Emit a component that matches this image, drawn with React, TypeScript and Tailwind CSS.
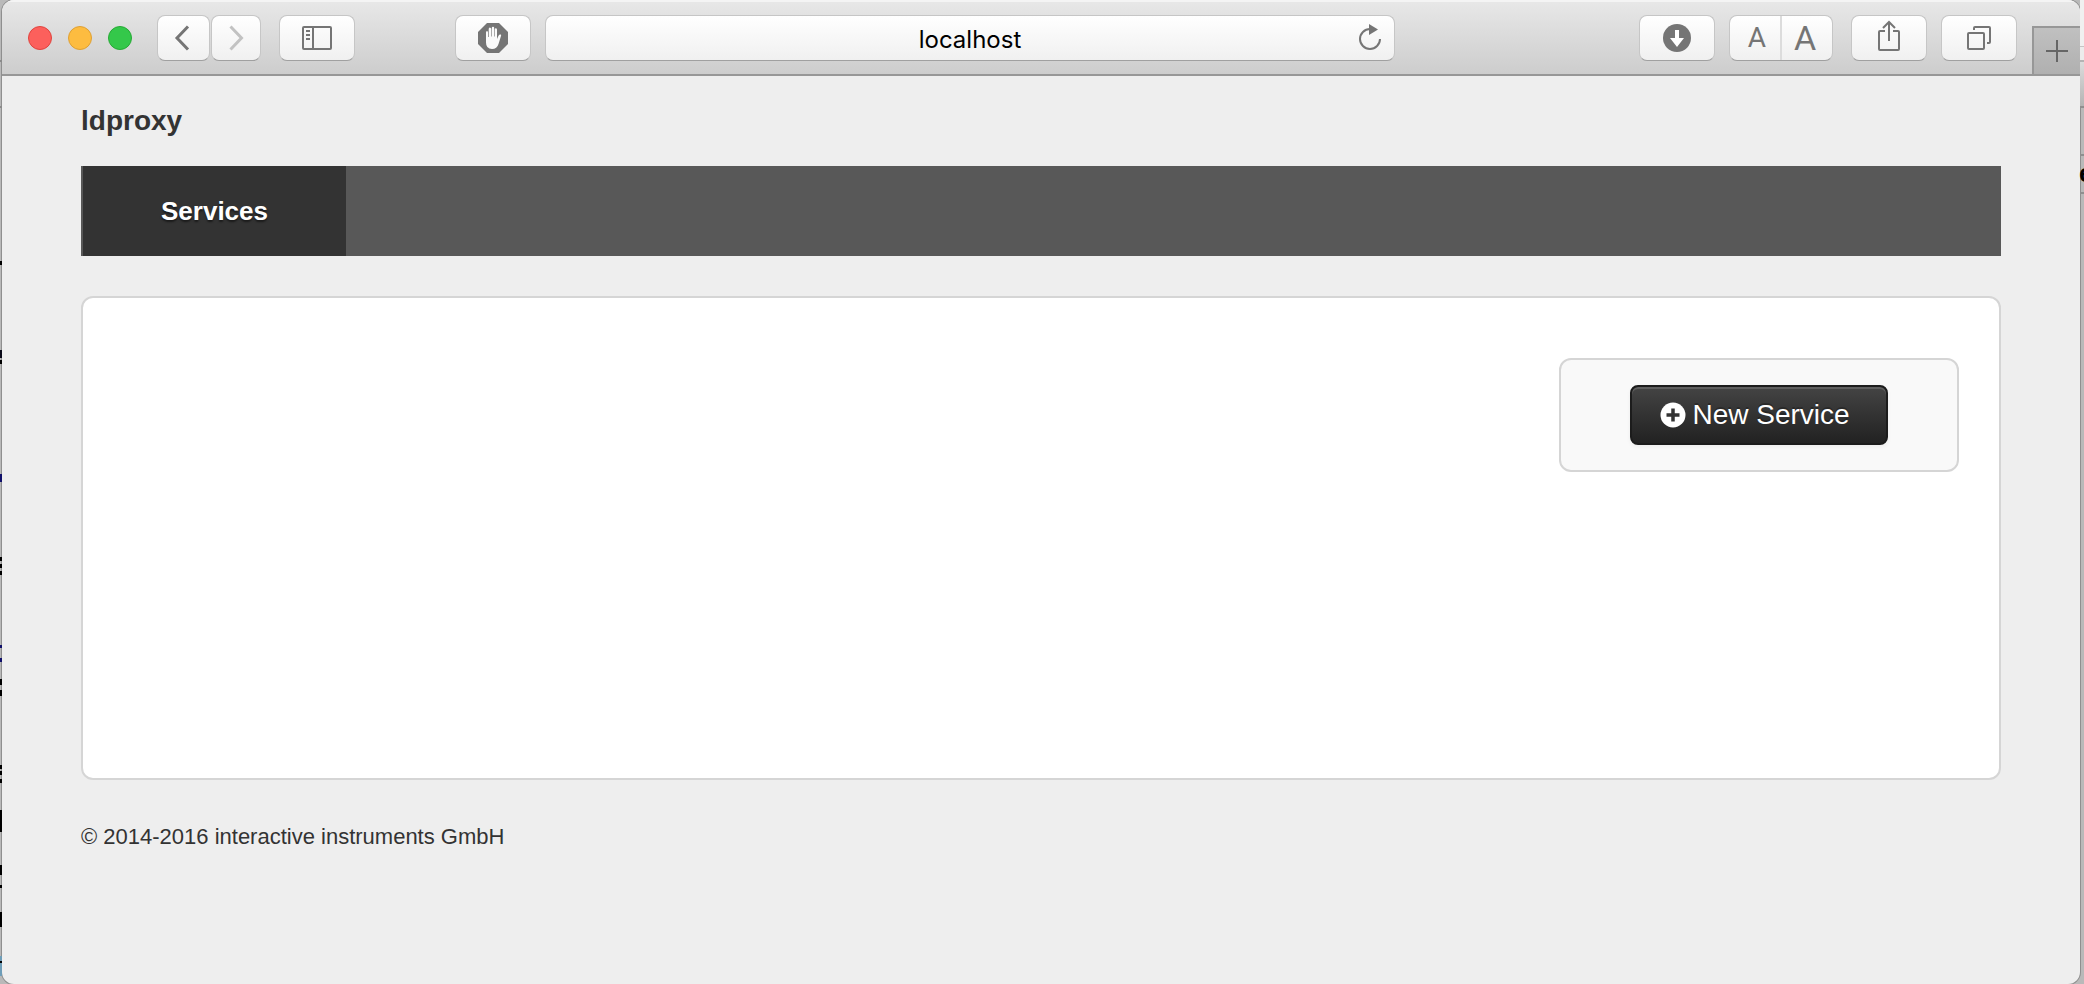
import React from "react";

const control =
  "flex h-[46px] items-center justify-center rounded-lg border border-[#c6c6c6] border-b-[#a0a0a0] bg-linear-to-b from-white to-[#f0f0f0] text-[#757575]";

const leftMarks = [
  { top: 60, height: 2, color: "#8a8a8a" },
  { top: 106, height: 2, color: "#8a8a8a" },
  { top: 261, height: 4, color: "#000" },
  { top: 350, height: 8, color: "#0a0a18" },
  { top: 360, height: 4, color: "#000" },
  { top: 474, height: 8, color: "#10106a" },
  { top: 557, height: 4, color: "#000" },
  { top: 564, height: 4, color: "#000" },
  { top: 571, height: 4, color: "#000" },
  { top: 645, height: 3, color: "#10106a" },
  { top: 658, height: 4, color: "#10106a" },
  { top: 679, height: 6, color: "#000" },
  { top: 690, height: 6, color: "#000" },
  { top: 765, height: 4, color: "#000" },
  { top: 771, height: 4, color: "#000" },
  { top: 779, height: 4, color: "#000" },
  { top: 810, height: 22, color: "#000" },
  { top: 865, height: 10, color: "#000" },
  { top: 885, height: 3, color: "#000" },
  { top: 912, height: 15, color: "#000" },
  { top: 956, height: 20, color: "#6e9db8" },
  { top: 961, height: 2, color: "#000" },
];

const rightMarks = [
  { top: 0, height: 46, color: "#f0f0f0" },
  { top: 46, height: 1, color: "#c4c4c4" },
  { top: 47, height: 13, color: "#ececec" },
  { top: 60, height: 2, color: "#b4b4b4" },
  { top: 62, height: 44, color: "linear-gradient(#dcdcdc, #b4b4b4)" },
  { top: 106, height: 2, color: "#8f8f8f" },
  { top: 154, height: 2, color: "#8f8f8f" },
  { top: 192, height: 2, color: "#8f8f8f" },
];

function Toolbar() {
  return (
    <header className="flex h-[76px] items-center border-b-2 border-[#979797] bg-linear-to-b from-[#e8e8e8] to-[#cdcdcd] pt-0.5 pl-[26px] shadow-[inset_0_2px_0_#f4f4f4]">
      <div className="flex gap-4">
        <button aria-label="Close" className="size-6 rounded-full border border-[#e0443e] bg-[#fc605c]" />
        <button aria-label="Minimize" className="size-6 rounded-full border border-[#dea034] bg-[#fdbc40]" />
        <button aria-label="Zoom" className="size-6 rounded-full border border-[#27aa35] bg-[#34c84a]" />
      </div>
      <div className="ml-[25px] flex gap-px">
        <button aria-label="Back" className={`${control} w-[53px] pr-1`}>
          <svg width="16" height="26" viewBox="0 0 16 26" fill="none" stroke="currentColor" strokeWidth="3">
            <path d="M14 1.500 3 13l11 11.500" />
          </svg>
        </button>
        <button aria-label="Forward" className={`${control} w-[50px]`}>
          <svg width="16" height="26" viewBox="0 0 16 26" fill="none" stroke="#c2c2c2" strokeWidth="3">
            <path d="M2.500 1.500 13.500 13l-11 11.500" />
          </svg>
        </button>
      </div>
      <button aria-label="Show sidebar" className={`${control} ml-[18px] w-19`}>
        <svg width="30" height="24" viewBox="0 0 30 24" fill="none" stroke="currentColor" strokeWidth="2">
          <rect x="1" y="1" width="28" height="22" rx="1" />
          <path d="M11 1v22M4 5h4M4 9h4M4 13h4" />
        </svg>
      </button>
      <button aria-label="Content blocker" className={`${control} ml-[100px] w-19`}>
        <svg width="30" height="30" viewBox="0 0 30 30">
          <path fill="#757575" d="M9 0h12l9 9v12l-9 9H9l-9-9V9z" />
          <path
            fill="#fafafa"
            d="M8 9.500q0-1.500 1-1.500t1 1.500V14h.7V6q0-1.500 1.200-1.500T13.200 6v7.500h.6V5q0-1.300 1.200-1.300T16.200 5v8.500h.6V6.500q0-1.300 1-1.300t1.200 1.300V16l1.500-3.200q1-1.900 2.300-1.200.6.400.2 1.500L20.500 21q-1.500 5-6.500 5-6 0-6-6.500z"
          />
        </svg>
      </button>
      <div className={`${control} relative ml-[14px] min-w-0 flex-1`}>
        <input
          aria-label="Address"
          defaultValue="localhost"
          className="h-full w-full bg-transparent pt-0.5 text-center font-[Inter,sans-serif] text-2xl text-black outline-none"
        />
        <button aria-label="Reload" className="absolute top-2 right-3">
          <svg width="24" height="28" viewBox="0 0 24 28">
            <path d="M12 5a10 10 0 1 0 10 10" fill="none" stroke="currentColor" strokeWidth="2" />
            <path d="M11 0v11l9-5.500z" fill="currentColor" />
          </svg>
        </button>
      </div>
      <button aria-label="Downloads" className={`${control} ml-[244px] w-19`}>
        <svg width="28" height="28" viewBox="0 0 28 28">
          <circle cx="14" cy="14" r="14" fill="#757575" />
          <path d="M12 6h4v8h5l-7 9-7-9h5z" fill="#fff" />
        </svg>
      </button>
      <div className={`${control} ml-[14px] w-[104px] font-[Roboto,sans-serif] text-[#7d7d7d]`}>
        <button aria-label="Smaller text" className="flex h-full flex-1 items-center justify-center border-r-2 border-[#dcdcdc] pl-1 text-[28px]">
          A
        </button>
        <button aria-label="Larger text" className="flex h-full flex-1 items-center justify-center pr-1 text-[34px]">
          A
        </button>
      </div>
      <button aria-label="Share" className={`${control} ml-[18px] w-19`}>
        <svg width="24" height="32" viewBox="0 0 24 32" fill="none" stroke="currentColor" strokeWidth="2" className="mb-1">
          <path d="M8 11H3q-1 0-1 1v17q0 1 1 1h18q1 0 1-1V12q0-1-1-1h-5M12 21V3M6 8l6-6 6 6" />
        </svg>
      </button>
      <button aria-label="Show all tabs" className={`${control} ml-[14px] w-19`}>
        <svg width="26" height="26" viewBox="0 0 26 26" fill="none" stroke="currentColor" strokeWidth="2">
          <rect x="2" y="8" width="16" height="16" rx="1" />
          <path d="M8 5V3q0-1 1-1h14q1 0 1 1v14q0 1-1 1h-2" />
        </svg>
      </button>
      <button
        aria-label="New tab"
        className="ml-[15px] flex h-12 w-12 items-center justify-center self-end border-t-2 border-l-2 border-[#979797] bg-linear-to-b from-[#c0c0c0] to-[#b0b0b0] text-[#666]"
      >
        <svg width="22" height="22" viewBox="0 0 22 22" stroke="currentColor" strokeWidth="2">
          <path d="M11 0v22M0 11h22" />
        </svg>
      </button>
    </header>
  );
}

export default function App() {
  return (
    <div className="relative flex min-h-screen overflow-hidden bg-[#b9b9b9] pr-1 pl-0.5 font-['Liberation_Sans',Arial,sans-serif] text-[#333]">
      {leftMarks.map((m) => (
        <i key={m.top} className="absolute left-0 w-0.5" style={{ top: m.top, height: m.height, background: m.color }} />
      ))}
      {rightMarks.map((m) => (
        <i key={m.top} className="absolute right-0 w-1" style={{ top: m.top, height: m.height, background: m.color }} />
      ))}
      <div className="flex flex-1 flex-col overflow-hidden rounded-xl bg-[#eee] shadow-[0_0_0_1px_#8f8f8f]">
        <Toolbar />
        <div className="px-[79px] pt-6">
          <h1 className="text-[28px] leading-[42px] font-bold">ldproxy</h1>
          <nav className="mt-6 flex h-[90px] bg-[#585858] pl-0.5">
            <a
              href="#services"
              className="flex items-center bg-[#333] px-[78px] text-[26px] font-bold text-white [text-shadow:0_2px_2px_rgba(0,0,0,0.5)]"
            >
              Services
            </a>
          </nav>
          <main className="mt-10 flex min-h-[484px] items-start justify-end rounded-xl border-2 border-[#d5d5d5] bg-white px-10 pt-15">
            <div className="flex w-[400px] justify-center rounded-xl border-2 border-[#d5d5d5] bg-[#f9f9f9] py-[25px]">
              <button className="flex h-15 items-center gap-1.5 rounded-lg border-2 border-[#1c1c1c] bg-linear-to-b from-[#444] to-[#222] pr-9 pl-7 text-[28px] text-white shadow-[inset_0_2px_0_#5f5f5f,0_2px_4px_rgba(0,0,0,0.05)] [text-shadow:0_-2px_0_rgba(0,0,0,0.25)]">
                <svg width="26" height="26" viewBox="0 0 26 26">
                  <circle cx="13" cy="13" r="12.500" fill="#fff" />
                  <path d="M13 6.500v13M6.500 13h13" stroke="#333" strokeWidth="3.500" />
                </svg>
                New Service
              </button>
            </div>
          </main>
          <footer className="mt-10 text-[22px] leading-[34px]">© 2014-2016 interactive instruments GmbH</footer>
        </div>
      </div>
      <span className="absolute top-[157px] left-full -ml-[5px] text-[26px] leading-8 font-bold text-black">e</span>
    </div>
  );
}
